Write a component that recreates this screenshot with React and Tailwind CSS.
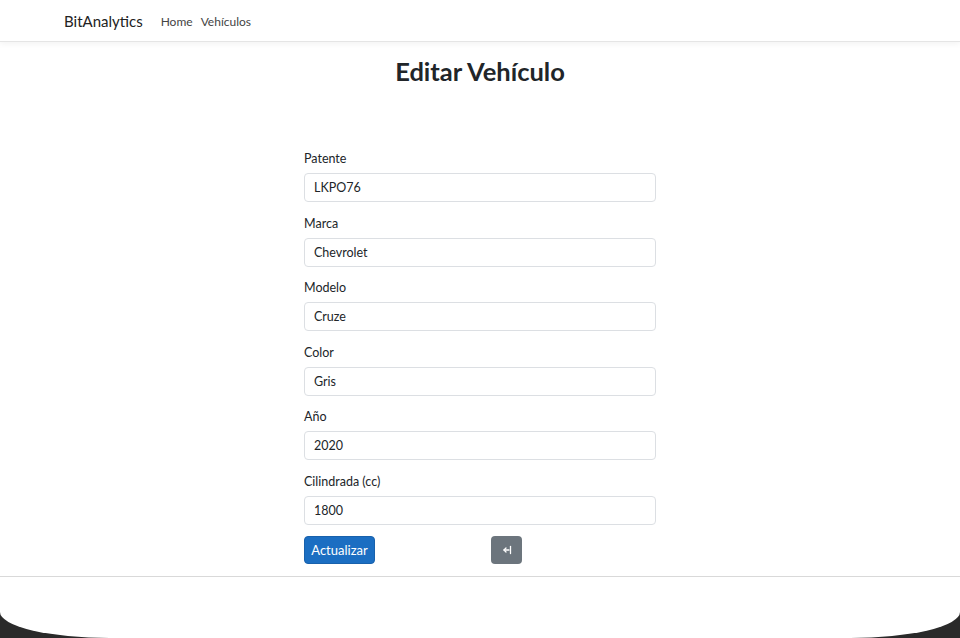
import React from 'react';

const fields = [
  { label: 'Patente', value: 'LKPO76' },
  { label: 'Marca', value: 'Chevrolet' },
  { label: 'Modelo', value: 'Cruze' },
  { label: 'Color', value: 'Gris' },
  { label: 'Año', value: '2020' },
  { label: 'Cilindrada (cc)', value: '1800' },
];

const BackIcon = () => (
  <svg width="12" height="12" viewBox="0 0 12 12" fill="none" stroke="currentColor" strokeWidth="1.3" strokeLinecap="round" strokeLinejoin="round">
    <path d="M8 6H3" />
    <path d="M5 4 3 6 5 8" />
    <path d="M9.5 2.5v7" />
  </svg>
);

const App = () => {
  return (
    <div className="min-h-screen bg-[#2a2a2a] font-['Lato',sans-serif] text-[#212529]">
      <div className="bg-white h-[638px] rounded-b-[110px_26px] overflow-hidden">
        <nav className="h-[42px] flex items-center pt-[1px] px-[64px] border-b border-[#e5e5e5] shadow-[0_2px_6px_rgba(0,0,0,0.05)]">
          <a href="#" className="text-[15px] text-[#222] mr-[18px]">BitAnalytics</a>
          <a href="#" className="text-[12px] text-[#444] mr-[8px] pt-[1px]">Home</a>
          <a href="#" className="text-[12px] text-[#444] pt-[1px]">Vehículos</a>
        </nav>

        <h1 className="text-center text-[25.5px] font-bold leading-[29px] mt-[15px]">Editar Vehículo</h1>

        <form className="w-[352px] mx-auto mt-[63px]" onSubmit={(e) => e.preventDefault()}>
          {fields.map((f) => (
            <div key={f.label} className="mb-[11.5px]">
              <label className="block text-[12.5px] leading-[20px] mb-[4px]">{f.label}</label>
              <input
                type="text"
                defaultValue={f.value}
                className="block w-full h-[29px] px-[9px] text-[12.5px] text-[#212529] border border-[#dcdfe3] rounded-[4px] focus:outline-none"
              />
            </div>
          ))}
          <div className="flex items-center">
            <button
              type="submit"
              className="h-[28px] w-[71px] pt-[1px] bg-[#1b6ec2] border border-[#1861ac] text-white text-[13px] rounded-[4px]"
            >
              Actualizar
            </button>
            <button
              type="button"
              className="ml-[116px] h-[28px] w-[31px] flex items-center justify-center bg-[#6c757d] text-white rounded-[4px]"
            >
              <BackIcon />
            </button>
          </div>
        </form>

        <hr className="mt-[12px] border-t border-[#d9d9d9]" />
      </div>
    </div>
  );
};

export default App;
